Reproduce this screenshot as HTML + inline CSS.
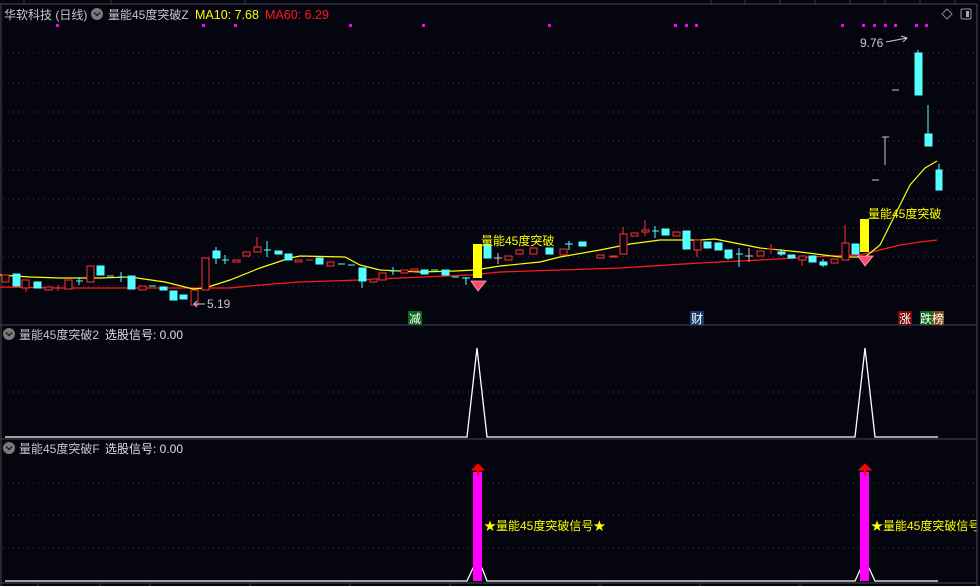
<!DOCTYPE html>
<html><head><meta charset="utf-8"><style>
body{margin:0;background:#05050f;width:980px;height:586px;overflow:hidden}
svg{display:block}
text{font-family:"Liberation Sans","Noto Sans CJK SC",sans-serif}
</style></head><body>
<svg width="980" height="586" viewBox="0 0 980 586" xmlns="http://www.w3.org/2000/svg">
<rect width="980" height="586" fill="#05050f"/>
<g stroke="#3c3c46" stroke-width="1.2" fill="none">
<line x1="0" y1="4" x2="980" y2="4"/>
<line x1="1" y1="4" x2="1" y2="586"/>
<line x1="977" y1="4" x2="977" y2="586"/>
<line x1="0" y1="325" x2="980" y2="325"/>
<line x1="0" y1="439" x2="980" y2="439"/>
<line x1="0" y1="583" x2="980" y2="583"/>
</g>
<g stroke="#3c3c46" stroke-width="1">
<line x1="24" y1="0" x2="24" y2="4"/><line x1="111" y1="0" x2="111" y2="4"/><line x1="245" y1="0" x2="245" y2="4"/>
<line x1="711" y1="0" x2="711" y2="4"/><line x1="745" y1="0" x2="745" y2="4"/><line x1="780" y1="0" x2="780" y2="4"/><line x1="815" y1="0" x2="815" y2="4"/><line x1="850" y1="0" x2="850" y2="4"/><line x1="885" y1="0" x2="885" y2="4"/><line x1="920" y1="0" x2="920" y2="4"/><line x1="955" y1="0" x2="955" y2="4"/>
<line x1="38" y1="583" x2="38" y2="586"/><line x1="100" y1="583" x2="100" y2="586"/><line x1="150" y1="583" x2="150" y2="586"/><line x1="250" y1="583" x2="250" y2="586"/><line x1="350" y1="583" x2="350" y2="586"/><line x1="450" y1="583" x2="450" y2="586"/><line x1="600" y1="583" x2="600" y2="586"/><line x1="700" y1="583" x2="700" y2="586"/><line x1="800" y1="583" x2="800" y2="586"/>
</g>
<g stroke="#3a3a48" stroke-width="1" stroke-dasharray="1,4">
<line x1="3" y1="53" x2="975" y2="53"/><line x1="3" y1="83" x2="975" y2="83"/><line x1="3" y1="112" x2="975" y2="112"/><line x1="3" y1="141" x2="975" y2="141"/><line x1="3" y1="170" x2="975" y2="170"/><line x1="3" y1="199" x2="975" y2="199"/><line x1="3" y1="228" x2="975" y2="228"/><line x1="3" y1="257" x2="975" y2="257"/><line x1="3" y1="286" x2="975" y2="286"/>
<line x1="3" y1="392" x2="975" y2="392"/>
<line x1="3" y1="483" x2="975" y2="483"/><line x1="3" y1="515" x2="975" y2="515"/><line x1="3" y1="548" x2="975" y2="548"/>
</g>
<text x="4" y="19" font-size="12" fill="#c8c8c8">华软科技 (日线)</text>
<circle cx="97" cy="14" r="6" fill="#7a7a7a"/><path d="M94 12.5 L97 15.5 L100 12.5" stroke="#222" stroke-width="1.5" fill="none"/>
<text x="108" y="19" font-size="12" fill="#c8c8c8">量能45度突破Z</text>
<text x="195" y="19" font-size="12.5" fill="#ffff00">MA10: 7.68</text>
<text x="265" y="19" font-size="12.5" fill="#ff1a1a">MA60: 6.29</text>
<path d="M947 9 L952 14 L947 19 L942 14 Z" stroke="#888" fill="none"/>
<rect x="961" y="9" width="10" height="10" rx="1.5" stroke="#999" fill="none"/><rect x="966" y="11" width="3" height="6" fill="#aaa"/>
<g fill="#ff00ff">
<rect x="56" y="24" width="3" height="3"/><rect x="202" y="24" width="3" height="3"/><rect x="234" y="24" width="3" height="3"/><rect x="349" y="24" width="3" height="3"/><rect x="422" y="24" width="3" height="3"/><rect x="548" y="24" width="3" height="3"/>
<rect x="674" y="24" width="3" height="3"/><rect x="685" y="24" width="3" height="3"/><rect x="695" y="24" width="3" height="3"/><rect x="841" y="24" width="3" height="3"/><rect x="862" y="24" width="3" height="3"/><rect x="873" y="24" width="3" height="3"/><rect x="884" y="24" width="3" height="3"/><rect x="894" y="24" width="3" height="3"/><rect x="915" y="24" width="3" height="3"/><rect x="925" y="24" width="3" height="3"/>
</g>
<polyline fill="none" stroke="#ff1a1a" stroke-width="1.3" points="0,287 60,288 230,288 260,285 300,282 360,280 400,278 470,275 500,272 560,270 620,268 700,263 760,260 830,256 860,255 880,250 900,245 920,242 937,240"/>
<polyline fill="none" stroke="#ffff00" stroke-width="1.2" points="0,275 30,277 60,278 100,278 130,277 165,282 193,289 205,288 230,280 260,268 290,258 300,256 345,257 360,265 380,270 420,272 455,271 475,270 500,266 540,262 560,257 600,250 630,244 660,240 700,240 715,239 730,242 760,248 800,252 840,257 865,257 880,245 895,215 910,185 925,168 937,161"/>
<g stroke="#ff3232" stroke-width="1" fill="#05050f">
<rect x="2" y="275" width="7" height="7"/><line x1="26" y1="288" x2="26" y2="292"/><rect x="22" y="280" width="7" height="8"/><rect x="45" y="287" width="7" height="3"/><line x1="55" y1="288" x2="62" y2="288"/><line x1="58" y1="285" x2="58" y2="291"/>
<rect x="65" y="280" width="7" height="9"/><rect x="87" y="266" width="7" height="16"/><rect x="139" y="286" width="7" height="4"/>
<rect x="191" y="290" width="7" height="15"/><rect x="202" y="258" width="7" height="32"/><rect x="233" y="260" width="7" height="2"/><rect x="243" y="252" width="7" height="4"/><line x1="257" y1="237" x2="257" y2="247"/><rect x="254" y="247" width="7" height="5"/>
<rect x="295" y="260" width="7" height="2"/><line x1="306" y1="260" x2="313" y2="260"/><rect x="327" y="262" width="7" height="4"/><rect x="370" y="279" width="7" height="3"/><rect x="379" y="273" width="7" height="7"/><rect x="401" y="270" width="7" height="3"/><rect x="411" y="269" width="7" height="2"/>
<rect x="505" y="256" width="7" height="4"/><rect x="516" y="250" width="7" height="4"/><rect x="530" y="248" width="7" height="6"/><rect x="560" y="249" width="7" height="6"/><rect x="597" y="255" width="7" height="3"/><rect x="610" y="256" width="7" height="1"/>
<line x1="623" y1="227" x2="623" y2="234"/><rect x="620" y="234" width="7" height="20"/><rect x="631" y="233" width="7" height="3"/><line x1="645" y1="220" x2="645" y2="236"/><rect x="642" y="230" width="7" height="2"/><rect x="673" y="232" width="7" height="4"/>
<line x1="697" y1="250" x2="697" y2="257"/><rect x="694" y="240" width="7" height="10"/><rect x="757" y="251" width="7" height="5"/><line x1="771" y1="244" x2="771" y2="254"/><line x1="767" y1="249" x2="775" y2="249"/>
<line x1="802" y1="260" x2="802" y2="266"/><rect x="799" y="256" width="7" height="4"/><rect x="831" y="259" width="7" height="4"/><line x1="845" y1="225" x2="845" y2="243"/><rect x="842" y="243" width="7" height="17"/>
</g>
<g fill="#54ffff" stroke="#54ffff" stroke-width="1">
<rect x="13" y="274" width="7" height="12"/><rect x="34" y="282" width="7" height="6"/><line x1="76" y1="281" x2="83" y2="281"/><line x1="79" y1="277" x2="79" y2="285"/>
<rect x="97" y="266" width="7" height="9"/><line x1="107" y1="276" x2="114" y2="276"/><line x1="118" y1="277" x2="125" y2="277"/><line x1="121" y1="272" x2="121" y2="282"/><rect x="128" y="276" width="7" height="13"/><line x1="149" y1="286" x2="156" y2="286"/><rect x="160" y="287" width="7" height="3"/><rect x="170" y="291" width="7" height="9"/><rect x="180" y="295" width="7" height="4"/>
<line x1="216" y1="247" x2="216" y2="264"/><rect x="213" y="251" width="7" height="7"/><line x1="222" y1="260" x2="229" y2="260"/><line x1="225" y1="255" x2="225" y2="264"/><line x1="264" y1="250" x2="271" y2="250"/><line x1="267" y1="241" x2="267" y2="257"/><rect x="275" y="251" width="7" height="3"/><rect x="285" y="254" width="7" height="6"/><rect x="316" y="258" width="7" height="6"/>
<line x1="338" y1="264" x2="345" y2="264"/><line x1="348" y1="265" x2="355" y2="265"/><rect x="359" y="268" width="7" height="13"/><line x1="362" y1="281" x2="362" y2="288"/><line x1="390" y1="271" x2="397" y2="271"/><line x1="393" y1="267" x2="393" y2="275"/><rect x="421" y="270" width="7" height="4"/><line x1="431" y1="270" x2="438" y2="270"/><rect x="442" y="270" width="7" height="5"/><line x1="452" y1="277" x2="459" y2="277"/><line x1="466" y1="277" x2="466" y2="285"/><line x1="462" y1="278" x2="470" y2="278"/>
<rect x="484" y="244" width="7" height="14"/><rect x="546" y="248" width="7" height="6"/><line x1="569" y1="241" x2="569" y2="250"/><line x1="565" y1="244" x2="573" y2="244"/><rect x="579" y="242" width="7" height="4"/>
<line x1="652" y1="231" x2="659" y2="231"/><line x1="655" y1="226" x2="655" y2="238"/><rect x="662" y="229" width="7" height="6"/><rect x="683" y="231" width="7" height="18"/><rect x="704" y="242" width="7" height="6"/><rect x="715" y="243" width="7" height="7"/><rect x="725" y="250" width="7" height="8"/><line x1="728" y1="258" x2="728" y2="260"/><line x1="736" y1="254" x2="743" y2="254"/><line x1="739" y1="248" x2="739" y2="267"/>
<rect x="778" y="252" width="7" height="2"/><line x1="781" y1="249" x2="781" y2="256"/><rect x="788" y="255" width="7" height="3"/><rect x="809" y="256" width="7" height="6"/><rect x="820" y="262" width="7" height="3"/><line x1="823" y1="259" x2="823" y2="267"/><rect x="852" y="244" width="7" height="10"/>
<line x1="918" y1="50" x2="918" y2="53"/><rect x="915" y="53" width="7" height="42"/><line x1="928" y1="105" x2="928" y2="134"/><rect x="925" y="134" width="7" height="12"/><line x1="939" y1="164" x2="939" y2="170"/><rect x="936" y="170" width="6" height="20"/>
</g>
<g stroke="#c8c8c8" stroke-width="1">
<line x1="494" y1="258" x2="502" y2="258"/><line x1="498" y1="253" x2="498" y2="264"/><line x1="745" y1="256" x2="753" y2="256"/><line x1="749" y1="248" x2="749" y2="262"/>
<line x1="872" y1="180" x2="879" y2="180"/><line x1="885" y1="137" x2="885" y2="165"/><line x1="882" y1="137" x2="889" y2="137"/><line x1="892" y1="90" x2="899" y2="90"/>
</g>
<rect x="473" y="244" width="9" height="34" fill="#ffff00"/>
<rect x="860" y="219" width="9" height="33" fill="#ffff00"/>
<g fill="#ff4a6a" stroke="#ffb0c0" stroke-width="0.8">
<path d="M471 281 L486 281 L478 291 Z"/><path d="M858 256 L873 256 L865 266 Z"/>
</g>
<text x="481" y="245" font-size="12" fill="#ffff00">量能45度突破</text>
<text x="868" y="218" font-size="12" fill="#ffff00">量能45度突破</text>
<text x="207" y="308" font-size="12" fill="#c8c8c8">5.19</text>
<path d="M205 304 L194 304 M197 301 L194 304 L197 307" stroke="#c8c8c8" fill="none"/>
<text x="860" y="47" font-size="12" fill="#c8c8c8">9.76</text>
<path d="M886 42 L907 38 M901 36 L907 38 L903 42" stroke="#c8c8c8" fill="none"/>
<rect x="408" y="311" width="14" height="14" fill="#0a6a1a"/><text x="409" y="323" font-size="12" fill="#fff">减</text>
<rect x="690" y="311" width="14" height="14" fill="#1a3a6a"/><text x="691" y="323" font-size="12" fill="#fff">财</text>
<rect x="898" y="311" width="14" height="14" fill="#7a0a0a"/><text x="899" y="323" font-size="12" fill="#fff">涨</text>
<rect x="920" y="311" width="12" height="14" fill="#0a6a1a"/><rect x="932" y="311" width="12" height="14" fill="#7a4a1a"/><text x="920" y="323" font-size="12" fill="#fff">跌榜</text>
<circle cx="9" cy="334" r="6" fill="#7a7a7a"/><path d="M6 332.5 L9 335.5 L12 332.5" stroke="#222" stroke-width="1.5" fill="none"/>
<text x="19" y="339" font-size="12" fill="#c8c8c8">量能45度突破2</text>
<text x="105" y="339" font-size="12" fill="#e0e0e0">选股信号: 0.00</text>
<polyline fill="none" stroke="#fff" stroke-width="1.3" points="5,437 467,437 477,348 487,437 855,437 865,348 875,437 938,437"/>
<circle cx="9" cy="448" r="6" fill="#7a7a7a"/><path d="M6 446.5 L9 449.5 L12 446.5" stroke="#222" stroke-width="1.5" fill="none"/>
<text x="19" y="453" font-size="12" fill="#c8c8c8">量能45度突破F</text>
<text x="105" y="453" font-size="12" fill="#e0e0e0">选股信号: 0.00</text>
<polyline fill="none" stroke="#fff" stroke-width="1.3" points="5,581 467,581 473,568 482,568 487,581 855,581 861,568 869,568 875,581 938,581"/>
<rect x="473" y="472" width="9" height="109" fill="#ff00ff"/>
<rect x="860" y="472" width="9" height="109" fill="#ff00ff"/>
<g fill="#ff0000" stroke="#ff0000"><path d="M472 470 L478 464 L484 470 Z"/><line x1="478" y1="469" x2="478" y2="476" stroke-width="2"/><path d="M859 470 L865 464 L871 470 Z"/><line x1="865" y1="469" x2="865" y2="476" stroke-width="2"/></g>
<text x="484" y="530" font-size="12" fill="#ffff00">★量能45度突破信号★</text>
<text x="871" y="530" font-size="12" fill="#ffff00">★量能45度突破信号★</text>
<rect x="977" y="0" width="3" height="586" fill="#05050f"/>
<line x1="977" y1="4" x2="977" y2="586" stroke="#3c3c46" stroke-width="1.2"/>
</svg>
</body></html>
